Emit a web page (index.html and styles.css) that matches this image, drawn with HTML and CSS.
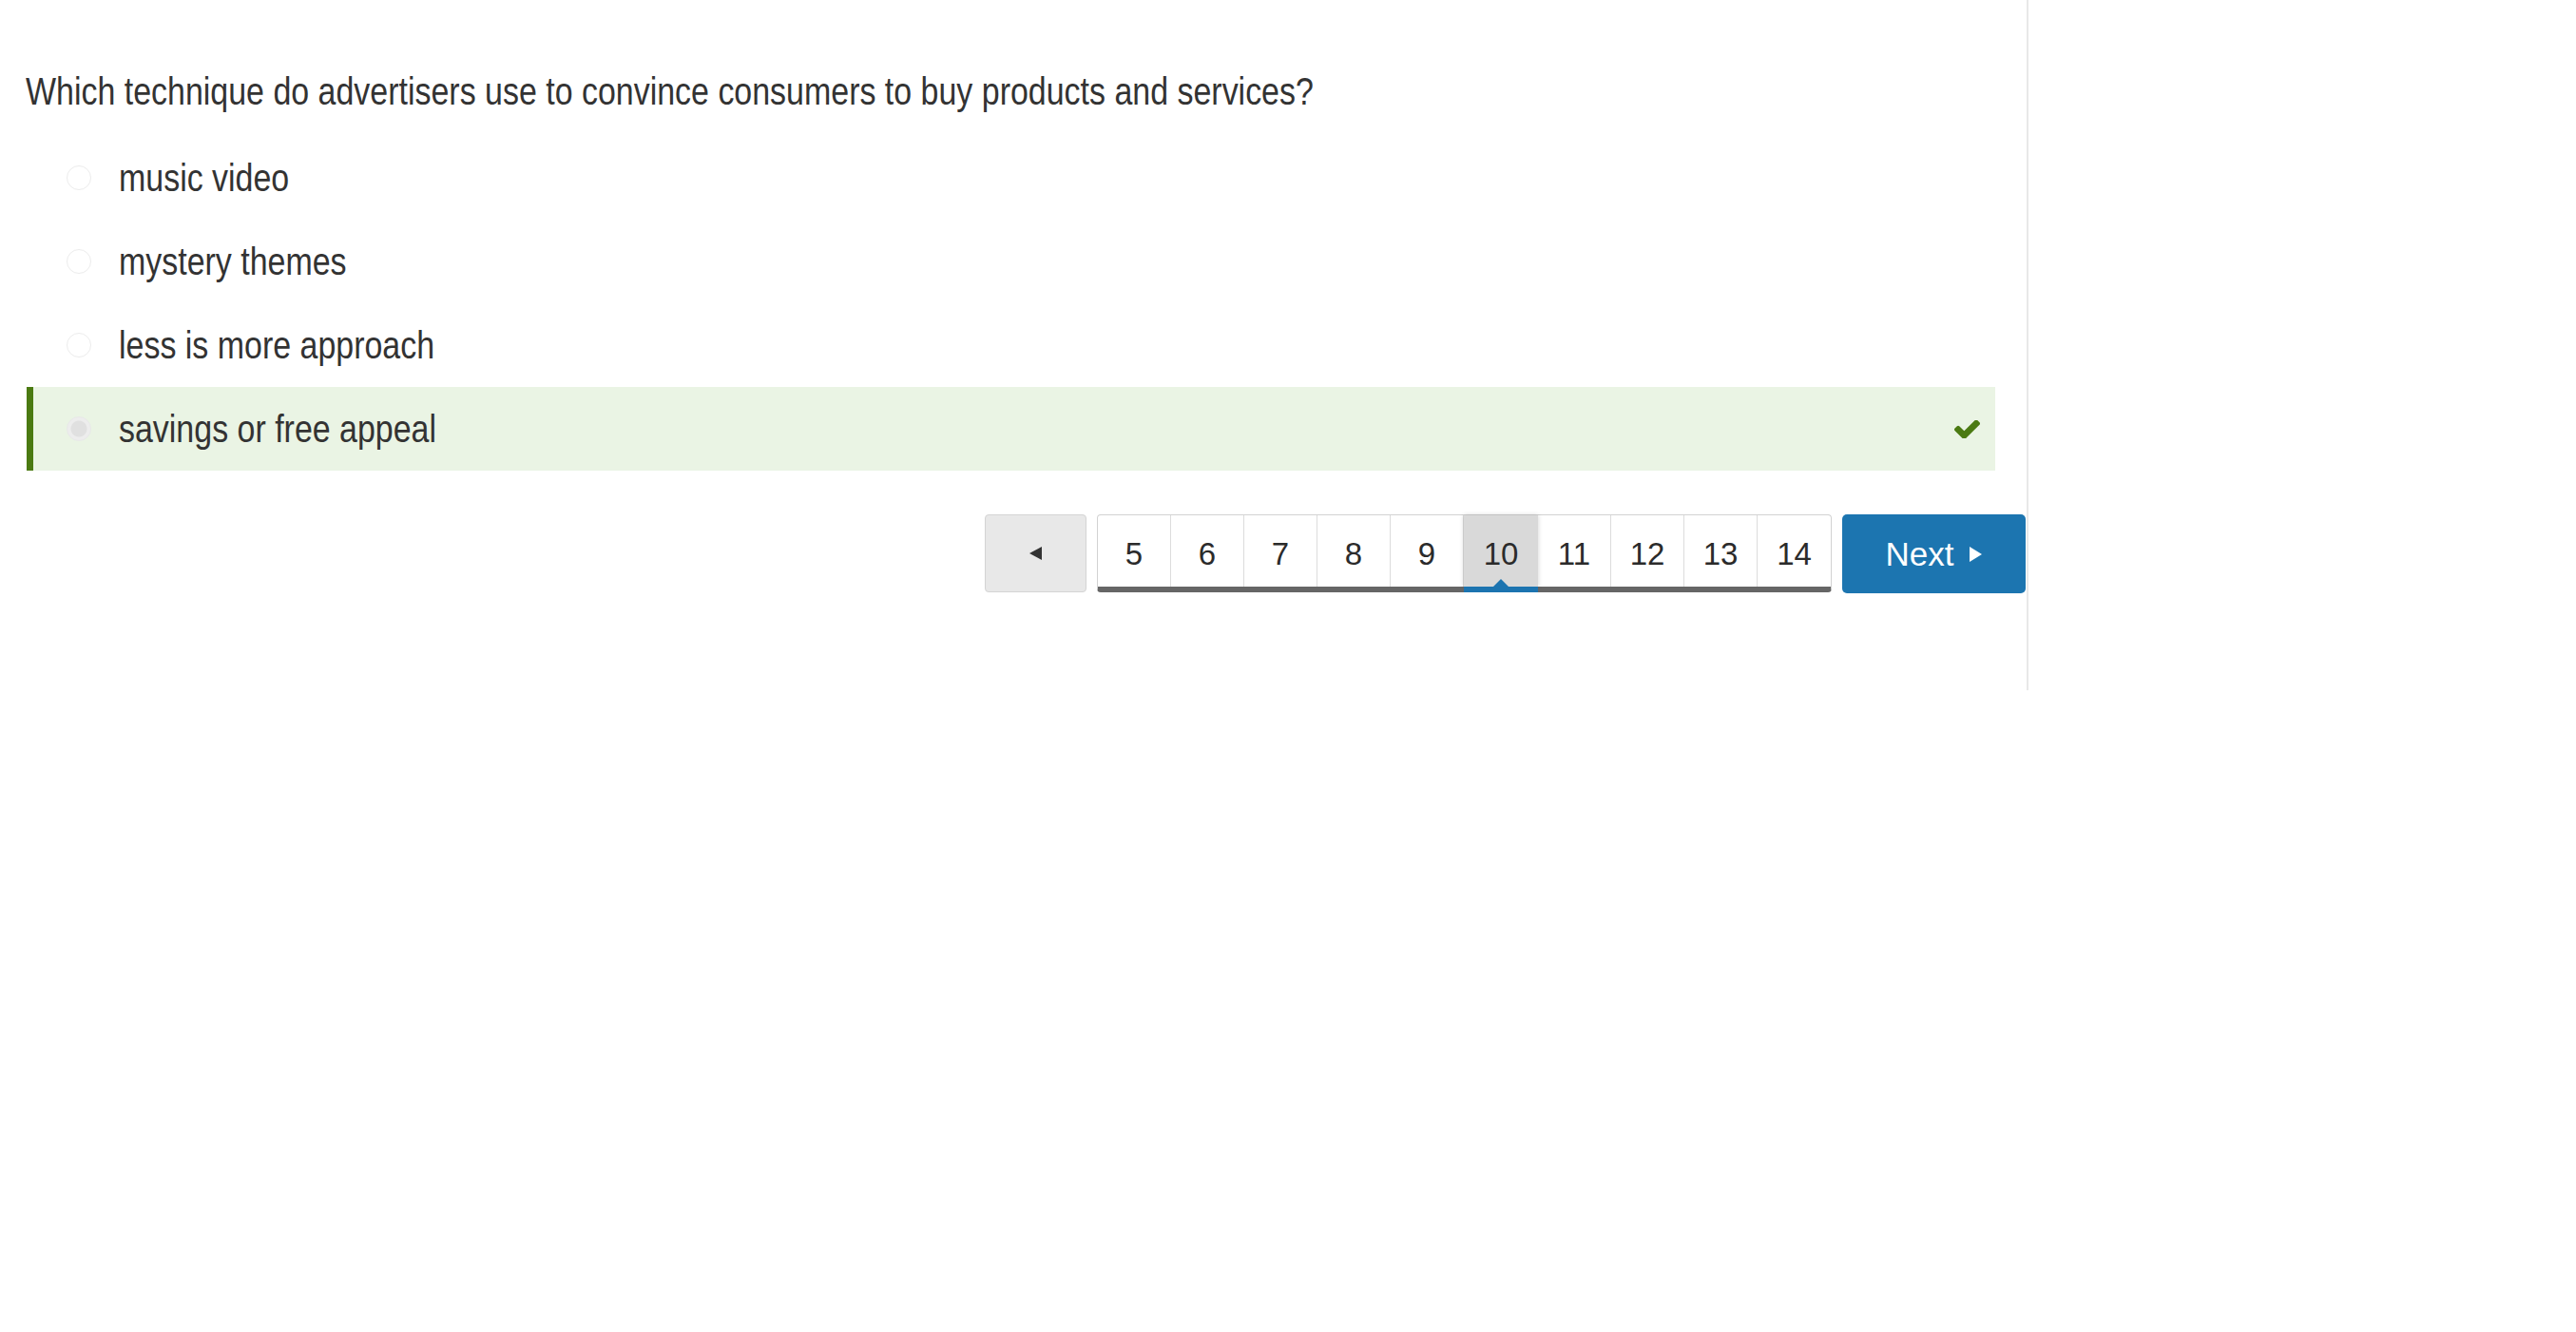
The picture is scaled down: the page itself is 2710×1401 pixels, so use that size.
FILE: index.html
```html
<!DOCTYPE html>
<html>
<head>
<meta charset="utf-8">
<link rel="stylesheet" href="styles.css">
</head>
<body>
<div class="main">
  <div class="question"><span class="narrow">Which technique do advertisers use to convince consumers to buy products and services?</span></div>
  <div class="options">
    <div class="option"><span class="radio"></span><span class="label"><span class="narrow">music video</span></span></div>
    <div class="option"><span class="radio"></span><span class="label"><span class="narrow">mystery themes</span></span></div>
    <div class="option"><span class="radio"></span><span class="label"><span class="narrow">less is more approach</span></span></div>
    <div class="option correct"><span class="radio checked"></span><span class="label"><span class="narrow">savings or free appeal</span></span>
      <svg class="check" viewBox="121 402 1550 1020" width="27" height="19"><path fill="#4b7a12" d="M1671 566q0 40-28 68l-724 724-136 136q-28 28-68 28t-68-28l-136-136-362-362q-28-28-28-68t28-68l136-136q28-28 68-28t68 28l294 295 656-657q28-28 68-28t68 28l136 136q28 28 28 68z"/></svg>
    </div>
  </div>
  <div class="pager">
    <div class="prev"><span class="tri-left"></span></div>
    <div class="pages">
      <div class="page">5</div>
      <div class="page">6</div>
      <div class="page">7</div>
      <div class="page">8</div>
      <div class="page">9</div>
      <div class="page active">10</div>
      <div class="page">11</div>
      <div class="page">12</div>
      <div class="page">13</div>
      <div class="page last">14</div>
    </div>
    <div class="next">Next<span class="tri-right"></span></div>
  </div>
</div>
</body>
</html>
```

FILE: styles.css
```css
html, body {
  margin: 0;
  padding: 0;
  background: #fff;
}
body {
  font-family: "Liberation Sans", Arial, sans-serif;
  color: #333;
}
.main {
  width: 2134px;
  min-height: 726px;
  border-right: 2px solid #e8e8e8;
  box-sizing: border-box;
}
.narrow {
  display: inline-block;
  white-space: nowrap;
  transform: scaleX(0.828);
  transform-origin: 0 50%;
}
.question {
  font-size: 41px;
  line-height: 48px;
  padding: 72px 0 0 27px;
  height: 71px;
  color: #333;
}
.options {
  margin: 0 33px 0 28px;
}
.option {
  height: 88px;
  display: flex;
  align-items: center;
  border-left: 7px solid transparent;
  padding-left: 35px;
}
.option.correct {
  background: #eaf4e4;
  border-left-color: #4b7a12;
}
.radio {
  width: 24px;
  height: 24px;
  border-radius: 50%;
  border: 1px solid #ececec;
  background: #fff;
  flex: none;
}
.radio.checked {
  background: radial-gradient(circle, #e0e0e0 0 8px, #ededed 9px);
  border-color: #e8e8e8;
}
.label {
  font-size: 41px;
  margin-left: 29px;
  color: #333;
}
.check {
  margin-left: auto;
  margin-right: 16px;
}
.pager {
  display: flex;
  justify-content: flex-end;
  align-items: flex-start;
  margin-top: 46px;
  padding-right: 1px;
}
.prev {
  width: 107px;
  height: 82px;
  box-sizing: border-box;
  background: #e8e8e8;
  border: 1px solid #d4d4d4;
  border-radius: 4px;
  display: flex;
  align-items: center;
  justify-content: center;
  flex: none;
}
.tri-left {
  width: 0;
  height: 0;
  border-top: 7px solid transparent;
  border-bottom: 7px solid transparent;
  border-right: 13px solid #333;
}
.pages {
  display: flex;
  margin-left: 11px;
  height: 82px;
  box-sizing: border-box;
  border: 1px solid #d2d2d2;
  border-bottom: 6px solid #666;
  border-radius: 4px;
  background: #fff;
  flex: none;
}
.page {
  width: 77px;
  height: 75px;
  box-sizing: border-box;
  padding-top: 6px;
  display: flex;
  align-items: center;
  justify-content: center;
  font-size: 33px;
  color: #2b2b2b;
  border-right: 1px solid #dcdcdc;
  position: relative;
  flex: none;
}
.page.last {
  border-right: none;
}
.page.active {
  width: 78px;
  background: #d9d9d9;
  box-shadow: 0 0 5px rgba(0,0,0,0.18);
  border-right: none;
  z-index: 1;
}
.page.active::after {
  content: "";
  position: absolute;
  left: 0;
  right: 0;
  bottom: -6px;
  height: 6px;
  background: #1c74b0;
}
.page.active::before {
  content: "";
  position: absolute;
  left: 50%;
  bottom: 0;
  margin-left: -8px;
  width: 0;
  height: 0;
  border-left: 8px solid transparent;
  border-right: 8px solid transparent;
  border-bottom: 8px solid #1c74b0;
}
.next {
  width: 193px;
  height: 83px;
  margin-left: 11px;
  background: #1c75b0;
  border-radius: 5px;
  color: #fff;
  font-size: 35px;
  display: flex;
  align-items: center;
  justify-content: center;
  flex: none;
}
.tri-right {
  display: inline-block;
  width: 0;
  height: 0;
  margin-left: 17px;
  border-top: 8px solid transparent;
  border-bottom: 8px solid transparent;
  border-left: 13px solid #fff;
}
```
